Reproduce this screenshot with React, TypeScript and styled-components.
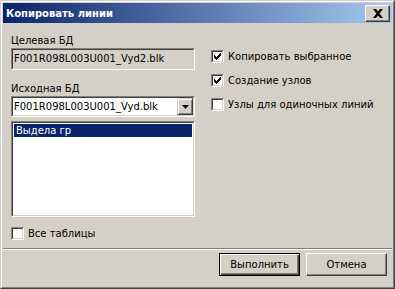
import styled, { createGlobalStyle } from 'styled-components'

const GlobalStyle = createGlobalStyle`
  html, body {
    margin: 0;
    padding: 0;
    background: #d4d0c8;
  }
  * {
    box-sizing: border-box;
  }
`

const Window = styled.div`
  width: 395px;
  height: 289px;
  border: 1px solid;
  border-color: #d4d0c8 #404040 #404040 #d4d0c8;
  background: #d4d0c8;
  font-family: 'DejaVu Sans', 'Liberation Sans', sans-serif;
  font-size: 10px;
  color: #000;
`

const Frame = styled.div`
  height: 100%;
  border: 1px solid;
  border-color: #ffffff #808080 #808080 #ffffff;
  padding: 1px;
  display: flex;
  flex-direction: column;
`

const TitleBar = styled.div`
  height: 20px;
  flex: none;
  display: flex;
  align-items: center;
  justify-content: space-between;
  padding: 0 2px 0 3px;
  background: linear-gradient(to right, #0a246a, #a6caf0);
`

const Title = styled.span`
  color: #fff;
  font-weight: bold;
  font-size: 10px;
`

const CloseButton = styled.div`
  width: 25px;
  height: 17px;
  display: flex;
  align-items: center;
  justify-content: center;
  background: #d4d0c8;
  border: 1px solid;
  border-color: #ffffff #404040 #404040 #ffffff;
  box-shadow: inset -1px -1px 0 #808080;
`

const Body = styled.div`
  flex: 1;
  display: flex;
  flex-direction: column;
`

const Main = styled.div`
  flex: 1;
  display: flex;
  padding: 11px 0 0 8px;
  gap: 16px;
`

const LeftColumn = styled.div`
  width: 184px;
  display: flex;
  flex-direction: column;
`

const RightColumn = styled.div`
  display: flex;
  flex-direction: column;
  padding-top: 16px;
  gap: 11px;
`

const Label = styled.div`
  line-height: 13px;
  height: 13px;
  margin-bottom: 1px;
`

const Sunken = styled.div`
  border: 1px solid;
  border-color: #808080 #ffffff #ffffff #808080;
`

const Inner = styled.div<{ $bg: string; $h: number }>`
  height: ${(p) => p.$h}px;
  border: 1px solid;
  border-color: #404040 #d4d0c8 #d4d0c8 #404040;
  background: ${(p) => p.$bg};
  display: flex;
  align-items: center;
`

const FieldText = styled.span`
  padding-left: 1px;
  line-height: 16px;
  white-space: nowrap;
  flex: 1;
`

const TargetBox = styled(Sunken)`
  margin-bottom: 12px;
`

const ComboBox = styled(Sunken)`
  margin-bottom: 4px;
`

const DropButton = styled.div`
  width: 16px;
  height: 17px;
  flex: none;
  display: flex;
  align-items: center;
  justify-content: center;
  background: #d4d0c8;
  border: 1px solid;
  border-color: #d4d0c8 #404040 #404040 #d4d0c8;
  box-shadow: inset 1px 1px 0 #ffffff, inset -1px -1px 0 #808080;
`

const ListInner = styled.div`
  height: 94px;
  border: 1px solid;
  border-color: #404040 #d4d0c8 #d4d0c8 #404040;
  background: #fff;
  padding: 1px;
`

const ListItem = styled.div<{ $selected?: boolean }>`
  height: 13px;
  line-height: 13px;
  padding-left: 2px;
  background: ${(p) => (p.$selected ? '#0a246a' : 'transparent')};
  color: ${(p) => (p.$selected ? '#fff' : '#000')};
`

const CheckRow = styled.label`
  display: flex;
  align-items: center;
  gap: 4px;
  height: 13px;
  line-height: 13px;
  white-space: nowrap;
`

const BottomCheck = styled(CheckRow)`
  margin-top: 10px;
`

const Box = styled.span`
  width: 13px;
  height: 13px;
  flex: none;
  border: 1px solid;
  border-color: #808080 #ffffff #ffffff #808080;
  display: block;
`

const BoxInner = styled.span`
  display: flex;
  align-items: center;
  justify-content: center;
  width: 11px;
  height: 11px;
  border: 1px solid;
  border-color: #404040 #d4d0c8 #d4d0c8 #404040;
  background: #fff;
`

const Separator = styled.div`
  height: 2px;
  border-top: 1px solid #808080;
  border-bottom: 1px solid #ffffff;
`

const Footer = styled.div`
  display: flex;
  justify-content: flex-end;
  gap: 6px;
  padding: 3px 5px 10px 0;
`

const Button = styled.div<{ $default?: boolean }>`
  width: 81px;
  height: 23px;
  display: flex;
  align-items: center;
  justify-content: center;
  background: #d4d0c8;
  border: 1px solid;
  border-color: ${(p) => (p.$default ? '#000' : '#ffffff #404040 #404040 #ffffff')};
  box-shadow: ${(p) =>
    p.$default
      ? 'inset 1px 1px 0 #ffffff, inset -1px -1px 0 #404040, inset -2px -2px 0 #808080'
      : 'inset -1px -1px 0 #808080'};
`

const Check = ({ checked }: { checked: boolean }) => (
  <Box>
    <BoxInner>
      {checked && (
        <svg width="7" height="7" viewBox="0 0 7 7">
          <path d="M0 2h1v1h1v1h1V3h1V2h1V1h1V0h1v3H6v1H5v1H4v1H3v1H2V6H1V5H0z" fill="#000" />
        </svg>
      )}
    </BoxInner>
  </Box>
)

const App = () => {
  return (
    <>
      <GlobalStyle />
      <Window>
        <Frame>
          <TitleBar>
            <Title>Копировать линии</Title>
            <CloseButton>
              <svg width="10" height="9" viewBox="0 0 10 9">
                <path d="M0 0h3l2 2.5L7 0h3L6.5 4.5 10 9H7L5 6.5 3 9H0l3.5-4.5z" fill="#000" />
              </svg>
            </CloseButton>
          </TitleBar>
          <Body>
            <Main>
              <LeftColumn>
                <Label>Целевая БД</Label>
                <TargetBox>
                  <Inner $bg="#d4d0c8" $h={20}>
                    <FieldText>F001R098L003U001_Vyd2.blk</FieldText>
                  </Inner>
                </TargetBox>
                <Label>Исходная БД</Label>
                <ComboBox>
                  <Inner $bg="#ffffff" $h={19}>
                    <FieldText>F001R098L003U001_Vyd.blk</FieldText>
                    <DropButton>
                      <svg width="7" height="4" viewBox="0 0 7 4">
                        <path d="M0 0h7L3.5 4z" fill="#000" />
                      </svg>
                    </DropButton>
                  </Inner>
                </ComboBox>
                <Sunken>
                  <ListInner>
                    <ListItem $selected>Выдела гр</ListItem>
                  </ListInner>
                </Sunken>
                <BottomCheck>
                  <Check checked={false} />
                  Все таблицы
                </BottomCheck>
              </LeftColumn>
              <RightColumn>
                <CheckRow>
                  <Check checked />
                  Копировать выбранное
                </CheckRow>
                <CheckRow>
                  <Check checked />
                  Создание узлов
                </CheckRow>
                <CheckRow>
                  <Check checked={false} />
                  Узлы для одиночных линий
                </CheckRow>
              </RightColumn>
            </Main>
            <Separator />
            <Footer>
              <Button $default>Выполнить</Button>
              <Button>Отмена</Button>
            </Footer>
          </Body>
        </Frame>
      </Window>
    </>
  )
}

export default App
